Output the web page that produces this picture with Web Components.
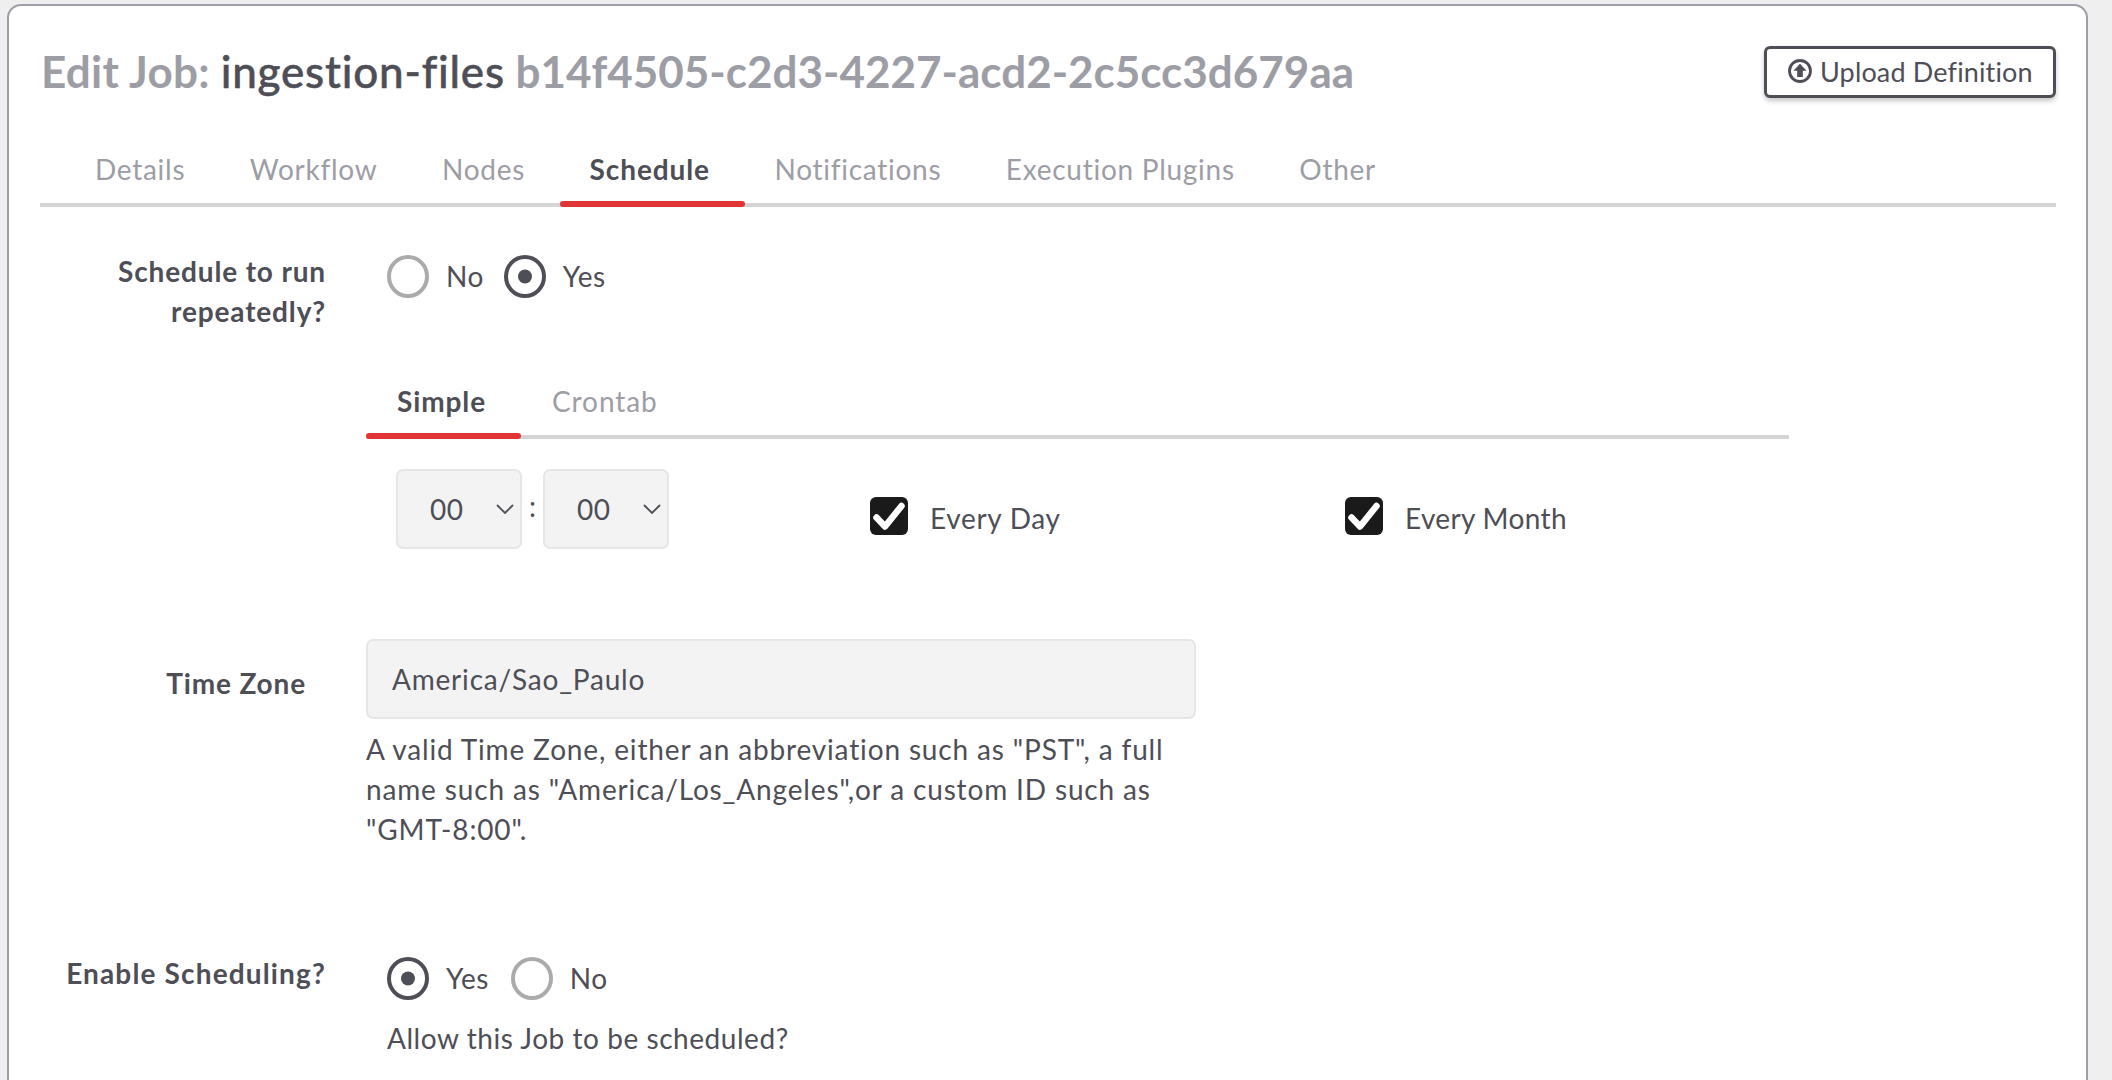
<!DOCTYPE html>
<html><head><meta charset="utf-8">
<style>
html,body{margin:0;height:100%;overflow:hidden;background:#efeff0}
body{padding:4px 24px 0 7px;box-sizing:border-box;font:28px/40px Lato,"Noto Sans",sans-serif;color:#4e4e57}
</style></head><body>
<script>
const def=(name,html)=>customElements.define(name,class extends HTMLElement{
  constructor(){super();this.attachShadow({mode:'open'});if(typeof html==='string')this.shadowRoot.innerHTML=html;}
  connectedCallback(){if(typeof html==='function'&&!this._d){this._d=1;this.shadowRoot.innerHTML=html(this);}}
});
def('tab-bar',h=>{
  const items=(h.getAttribute('items')||'').split('|'),act=h.getAttribute('active');
  return `<style>:host{display:flex;position:relative;border-bottom:4px solid #d4d4d4;font:28px/40px Lato,sans-serif;letter-spacing:var(--tab-ls,.9px)}
  .t{position:relative;padding:0 var(--tab-r,35px) 14px var(--tab-l,31px);color:#9d9da6;white-space:nowrap}
  .t.a{color:#4e4e57;font-weight:700;letter-spacing:.9px}
  .t.a::after{content:"";position:absolute;left:0;right:0;bottom:-4px;height:6px;border-radius:3px;background:#e03535}
  </style>`+items.map(i=>`<div class="t${i===act?' a':''}">${i}</div>`).join('');
});
def('x-radio',h=>{
  const on=h.hasAttribute('checked');
  return `<style>:host{display:inline-flex;align-items:center;gap:17px;color:#4e4e57;letter-spacing:.5px}
  svg{display:block;flex:none} span{margin-top:-2px}</style>
  <svg width="42" height="43" viewBox="0 0 42 43"><ellipse cx="21" cy="21.5" rx="19" ry="19.5" fill="#fff" stroke="${on?'#4e4e57':'#ababab'}" stroke-width="4"/>${on?'<circle cx="21" cy="21.5" r="7" fill="#4e4e57"/>':''}</svg><span><slot></slot></span>`;
});
def('x-check',`<style>:host{display:inline-flex;align-items:center;gap:22px;letter-spacing:.7px;margin-top:18px}
  svg{display:block;flex:none;margin-top:-4px}</style>
  <svg width="38" height="38" viewBox="0 0 38 38"><rect width="38" height="38" rx="6" fill="#1a1a1a"/><path d="M6.5 20.5 L15 29.5 L31.5 9" fill="none" stroke="#fff" stroke-width="6.5" stroke-linecap="round" stroke-linejoin="round"/></svg><slot></slot>`);
def('x-select',`<style>:host{display:flex;align-items:center;justify-content:space-between;box-sizing:border-box;height:80px;width:126px;padding:0 6px 0 32px;background:#f3f3f3;border:2px solid #e6e6e6;border-radius:7px;letter-spacing:.6px}
  span{display:block}
  svg{display:block;margin-top:-1px}</style><span><slot></slot></span>
  <svg width="18" height="10" viewBox="0 0 18 10"><path d="M1 1l8 8 8-8" fill="none" stroke="#4e4e57" stroke-width="1.8"/></svg>`);
def('x-input',`<style>:host{display:flex;align-items:center;box-sizing:border-box;height:80px;width:830px;padding:0 24px;background:#f3f3f3;border:2px solid #e6e6e6;border-radius:7px;letter-spacing:.8px}
  </style><span><slot></slot></span>`);
def('x-button',`<style>:host{display:inline-flex;align-items:center;gap:8px;box-sizing:border-box;height:52px;width:292px;padding:0 21px;border:3px solid #4e4e57;border-radius:6px;background:#fff;color:#4e4e57;box-shadow:0 3px 5px rgba(0,0,0,.22);font-size:27px;letter-spacing:.15px;white-space:nowrap}
  svg{display:block;flex:none;margin-top:-2px}</style>
  <svg width="24" height="24" viewBox="0 0 24 24"><circle cx="12" cy="12" r="10.5" fill="none" stroke="#4e4e57" stroke-width="2.8"/><path d="M12 4.8l6.6 6.9h-3.8V18H9.2v-6.3H5.4z" fill="#4e4e57"/></svg><slot></slot>`);
def('form-row',h=>{
  const w=h.getAttribute('label-width')||'286',pt=h.getAttribute('label-top')||'0';
  return `<style>:host{display:grid;grid-template-columns:${w}px 1fr;column-gap:${h.getAttribute('gap')||61}px}
  .l{font-weight:700;text-align:right;padding-top:${pt}px;letter-spacing:.85px}</style>
  <div class="l"><slot name="label"></slot></div><div class="c"><slot></slot></div>`;
});
def('job-card',`<style>:host{display:block;box-sizing:border-box;height:1200px;padding:40px 30px 0 31px;background:#fff;border:2px solid #9e9ea6;border-radius:14px}</style><slot></slot>`);
def('job-title',`<style>:host{display:block;font:700 44px/50px Lato,sans-serif;color:#9d9da6;white-space:nowrap}
  ::slotted(b){font-weight:500;color:#4e4e57;letter-spacing:.8px;-webkit-text-stroke:.5px #4e4e57}
  </style><slot></slot>`);
def('job-form',`<style>:host{display:block}
  .head{display:flex;justify-content:space-between;align-items:flex-start;margin-bottom:32px}
  </style><div class="head"><slot name="title"></slot><slot name="action"></slot></div><slot></slot>`);
def('schedule-pane',`<style>:host{display:block;margin:50px 0 0 0;width:1423px}
  .times{display:grid;grid-template-columns:474px 475px auto;margin:30px 0 0 30px;align-items:center}
  </style><slot name="tabs"></slot><div class="times"><slot></slot></div>`);
def('time-picker',`<style>:host{display:flex;align-items:center;gap:7px}
  span{width:7px;text-align:center;margin-top:-6px}
  </style><slot name="h"></slot><span>:</span><slot name="m"></slot>`);
def('help-text',`<style>:host{display:block;letter-spacing:.85px;white-space:nowrap}</style><slot></slot>`);

document.body.insertAdjacentHTML('beforeend',`<job-card><job-form>
 <job-title slot="title"><span style="margin-left:1px;letter-spacing:.3px">Edit Job:</span> <b>ingestion-files</b> b14f4505-c2d3-4227-acd2-2c5cc3d679aa</job-title>
 <x-button slot="action">Upload Definition</x-button>
 <tab-bar items="Details|Workflow|Nodes|Schedule|Notifications|Execution Plugins|Other" active="Schedule" style="padding-left:25px;padding-top:19px;--tab-l:30px;--tab-r:34.6px;--tab-ls:.72px"></tab-bar>
 <form-row style="margin-top:44px"><span slot="label">Schedule to run<br>repeatedly?</span>
   <div style="display:flex;gap:20px;margin-top:4px;height:43px"><x-radio>No</x-radio><x-radio checked>Yes</x-radio></div></form-row>
 <div style="margin-left:326px"><schedule-pane>
   <tab-bar slot="tabs" items="Simple|Crontab" active="Simple"></tab-bar>
   <time-picker><x-select slot="h">00</x-select><x-select slot="m">00</x-select></time-picker>
   <x-check>Every Day</x-check><x-check style="letter-spacing:.35px">Every Month</x-check>
 </schedule-pane></div>
 <form-row label-width="266" gap="60" label-top="24" style="margin-top:90px"><span slot="label">Time Zone</span>
   <x-input>America/Sao_Paulo</x-input>
   <help-text style="margin-top:10px">A valid Time Zone, either an abbreviation such as "PST", a full<br>name such as "America/Los_Angeles",or a custom ID such as<br>"GMT-8:00".</help-text></form-row>
 <form-row style="margin-top:104px"><span slot="label" style="letter-spacing:1.15px">Enable Scheduling?</span>
   <div style="display:flex;gap:22px;margin-top:4px;height:43px"><x-radio checked>Yes</x-radio><x-radio>No</x-radio></div>
   <help-text style="margin-top:18px;letter-spacing:.55px">Allow this Job to be scheduled?</help-text></form-row>
</job-form></job-card>`);
</script>
</body></html>
